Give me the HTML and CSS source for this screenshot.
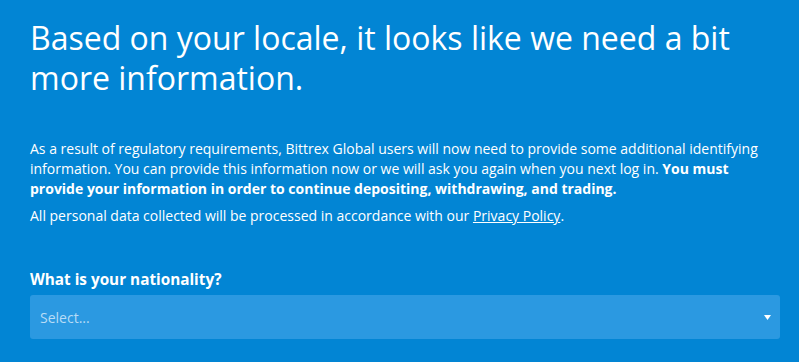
FILE: index.html
```html
<!DOCTYPE html>
<html lang="en">
<head>
<meta charset="utf-8">
<title>More information</title>
<link rel="stylesheet" href="styles.css">
</head>
<body>
<main class="page">
  <h1 class="title">Based on your locale, it looks like we need a bit more information.</h1>
  <p class="text">As a result of regulatory requirements, Bittrex Global users will now need to provide some additional identifying information. You can provide this information now or we will ask you again when you next log in. <strong>You must provide your information in order to continue depositing, withdrawing, and trading.</strong></p>
  <p class="text text-second">All personal data collected will be processed in accordance with our <a class="link" href="#">Privacy Policy</a>.</p>
  <label class="label">What is your nationality?</label>
  <div class="select">
    <span class="placeholder">Select...</span>
    <svg class="caret" width="7" height="5" viewBox="0 0 7 5"><path d="M0 0 H7 L3.5 5 Z" fill="#ffffff"/></svg>
  </div>
</main>
</body>
</html>
```
FILE: styles.css
```css
html, body {
  margin: 0;
  padding: 0;
  background: #0285d4;
}
body {
  font-family: "Open Sans", "Liberation Sans", sans-serif;
  color: #ffffff;
}
.page {
  padding: 18px 19px 0 30px;
  display: flex;
  flex-direction: column;
}
.title {
  margin: 0;
  font-size: 32px;
  line-height: 40px;
  font-weight: 400;
  max-width: 730px;
}
.text {
  margin: 41px 0 0 0;
  font-size: 14px;
  line-height: 20px;
}
.text strong {
  font-weight: 700;
}
.text-second {
  margin-top: 7px;
}
.link {
  color: #ffffff;
  text-decoration: underline;
}
.label {
  margin-top: 43px;
  font-size: 15.3px;
  line-height: 20px;
  font-weight: 700;
}
.select {
  margin-top: 6px;
  height: 44px;
  background: #2b99e1;
  border-radius: 3px;
  display: flex;
  align-items: center;
  justify-content: space-between;
  padding: 0 9px 0 10px;
}
.placeholder {
  font-size: 14px;
  line-height: 20px;
  color: #b8dcf6;
  padding-top: 2px;
}
.caret {
  display: block;
  margin-top: 1px;
}
```
